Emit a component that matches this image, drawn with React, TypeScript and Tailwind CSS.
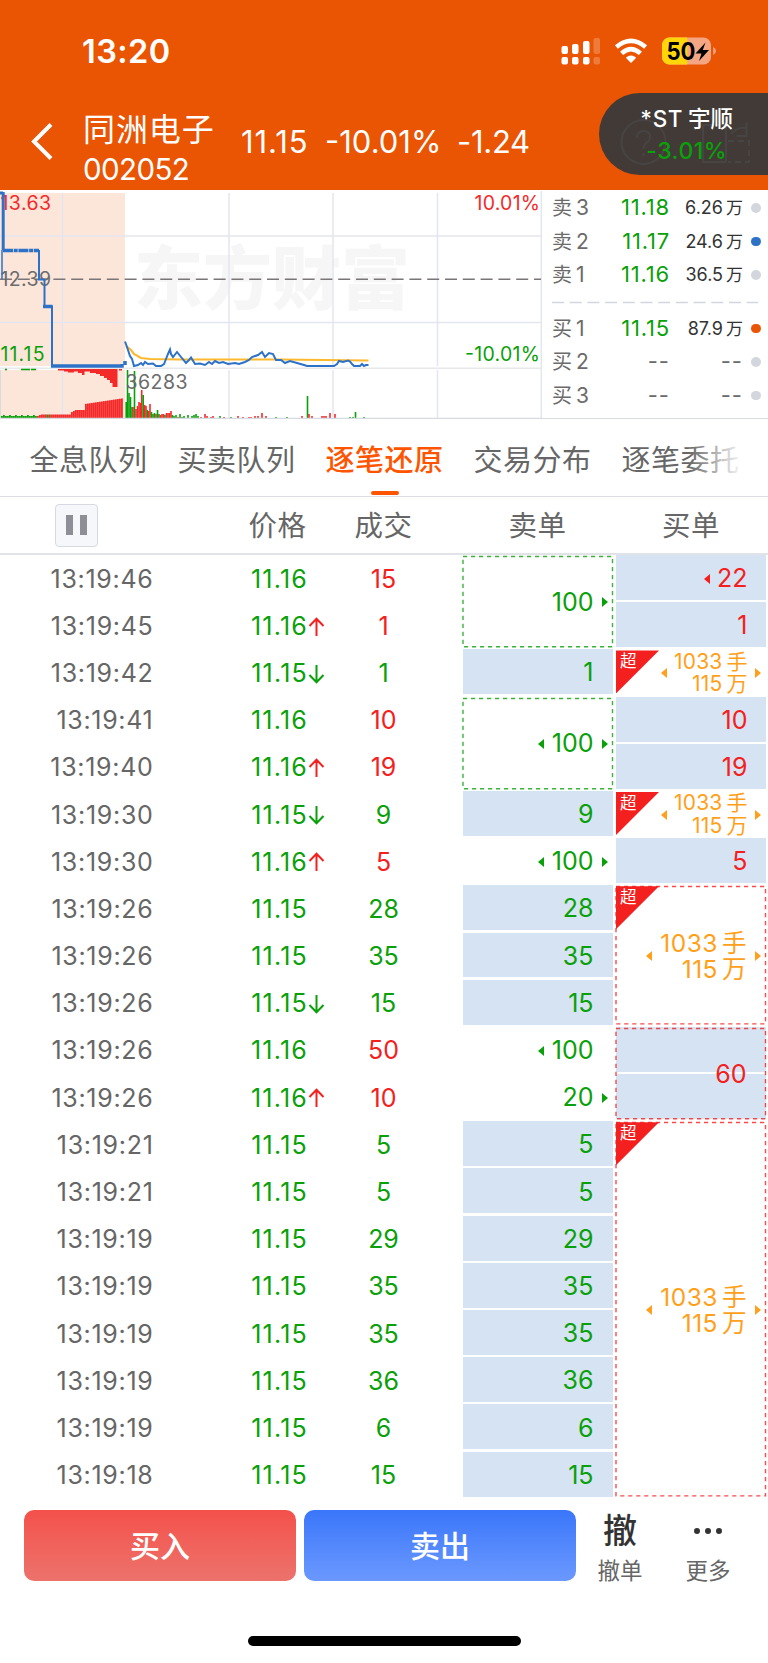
import type { ReactNode } from 'react'

type Tone = 'up' | 'down' | 'big'

type Tick = {
  time: string
  price: string
  dir?: 'up' | 'down'
  vol: string
  side: 'buy' | 'sell'
}

type Block = {
  span: number
  text: string
  filled?: boolean
  outlined?: boolean
  left?: boolean
  right?: boolean
  big?: boolean
}

const ROW_HEIGHT = 47.2

const toneText: Record<Tone, string> = {
  up: 'text-[#f42020]',
  down: 'text-[#0aa00a]',
  big: 'text-[#ff9f1a]',
}

const ticks: Tick[] = [
  { time: '13:19:46', price: '11.16', vol: '15', side: 'buy' },
  { time: '13:19:45', price: '11.16', dir: 'up', vol: '1', side: 'buy' },
  { time: '13:19:42', price: '11.15', dir: 'down', vol: '1', side: 'sell' },
  { time: '13:19:41', price: '11.16', vol: '10', side: 'buy' },
  { time: '13:19:40', price: '11.16', dir: 'up', vol: '19', side: 'buy' },
  { time: '13:19:30', price: '11.15', dir: 'down', vol: '9', side: 'sell' },
  { time: '13:19:30', price: '11.16', dir: 'up', vol: '5', side: 'buy' },
  { time: '13:19:26', price: '11.15', vol: '28', side: 'sell' },
  { time: '13:19:26', price: '11.15', vol: '35', side: 'sell' },
  { time: '13:19:26', price: '11.15', dir: 'down', vol: '15', side: 'sell' },
  { time: '13:19:26', price: '11.16', vol: '50', side: 'buy' },
  { time: '13:19:26', price: '11.16', dir: 'up', vol: '10', side: 'buy' },
  { time: '13:19:21', price: '11.15', vol: '5', side: 'sell' },
  { time: '13:19:21', price: '11.15', vol: '5', side: 'sell' },
  { time: '13:19:19', price: '11.15', vol: '29', side: 'sell' },
  { time: '13:19:19', price: '11.15', vol: '35', side: 'sell' },
  { time: '13:19:19', price: '11.15', vol: '35', side: 'sell' },
  { time: '13:19:19', price: '11.15', vol: '36', side: 'sell' },
  { time: '13:19:19', price: '11.15', vol: '6', side: 'sell' },
  { time: '13:19:18', price: '11.15', vol: '15', side: 'sell' },
]

const sellBlocks: Block[] = [
  { span: 2, text: '100', outlined: true, right: true },
  { span: 1, text: '1', filled: true },
  { span: 2, text: '100', outlined: true, left: true, right: true },
  { span: 1, text: '9', filled: true },
  { span: 1, text: '100', left: true, right: true },
  { span: 1, text: '28', filled: true },
  { span: 1, text: '35', filled: true },
  { span: 1, text: '15', filled: true },
  { span: 1, text: '100', left: true },
  { span: 1, text: '20', right: true },
  { span: 1, text: '5', filled: true },
  { span: 1, text: '5', filled: true },
  { span: 1, text: '29', filled: true },
  { span: 1, text: '35', filled: true },
  { span: 1, text: '35', filled: true },
  { span: 1, text: '36', filled: true },
  { span: 1, text: '6', filled: true },
  { span: 1, text: '15', filled: true },
]

const buyBlocks: Block[] = [
  { span: 1, text: '22', filled: true, left: true },
  { span: 1, text: '1', filled: true },
  { span: 1, text: '1033', big: true, left: true, right: true },
  { span: 1, text: '10', filled: true },
  { span: 1, text: '19', filled: true },
  { span: 1, text: '1033', big: true, left: true, right: true },
  { span: 1, text: '5', filled: true },
  { span: 3, text: '1033', big: true, outlined: true, left: true, right: true },
  { span: 2, text: '60', filled: true, outlined: true },
  { span: 8, text: '1033', big: true, outlined: true, left: true, right: true },
]

const book = [
  { label: '卖', level: '3', price: '11.18', vol: '6.26', dot: 'bg-[#d3d6dd]' },
  { label: '卖', level: '2', price: '11.17', vol: '24.6', dot: 'bg-[#2e72c8]' },
  { label: '卖', level: '1', price: '11.16', vol: '36.5', dot: 'bg-[#d3d6dd]' },
  { label: '买', level: '1', price: '11.15', vol: '87.9', dot: 'bg-[#ea5504]' },
  { label: '买', level: '2', dot: 'bg-[#d3d6dd]' },
  { label: '买', level: '3', dot: 'bg-[#d3d6dd]' },
]

const tabs = ['全息队列', '买卖队列', '逐笔还原', '交易分布', '逐笔委托']

// [x, height, colour] of the bars after the open
const volumeBars: [number, number, 'r' | 'g'][] = [
  [126.2, 16, 'g'], [127.5, 48, 'g'], [129, 25, 'g'], [130.5, 21, 'g'], [132, 11, 'g'],
  [133, 11, 'r'], [134.5, 47, 'g'], [136, 9, 'r'], [137.5, 12, 'r'], [139, 16, 'r'],
  [140.3, 15, 'r'], [141.7, 28, 'r'], [143.2, 23, 'g'], [144.7, 13, 'r'], [146, 12, 'r'],
  [147.3, 8, 'g'], [148.7, 7, 'r'], [150, 14, 'r'], [151.5, 6, 'g'], [153, 4, 'g'],
  [154.5, 5, 'g'], [156, 4, 'r'], [157.5, 8, 'g'], [159, 4, 'g'], [160.5, 3, 'r'],
  [162, 4, 'r'], [163.5, 4, 'r'], [165, 3, 'g'], [166.5, 5, 'r'], [168, 5, 'r'],
  [169.5, 5, 'r'], [171, 7, 'r'], [172.5, 3, 'g'], [174, 2, 'g'], [176, 3, 'g'],
  [178, 1, 'r'], [180, 4, 'g'], [182, 1, 'g'], [184, 2, 'g'], [188, 3, 'g'],
  [192, 2, 'g'], [194, 3, 'g'], [196, 4, 'g'], [198, 2, 'g'], [201, 1, 'r'],
  [205, 4, 'r'], [207, 2, 'r'], [211, 1, 'r'], [213, 2, 'r'], [220, 2, 'g'],
  [224, 1, 'r'], [231, 1, 'g'], [238, 2, 'r'], [243, 1, 'r'], [249, 1, 'r'],
  [251, 1, 'r'], [255, 2, 'r'], [258, 2, 'r'], [262, 5, 'r'], [266, 2, 'r'],
  [276, 1, 'g'], [287, 1, 'g'], [302, 2, 'r'], [307.5, 22, 'g'], [309, 4, 'r'],
  [312, 2, 'r'], [322, 2, 'r'], [324, 2, 'r'], [326, 2, 'r'], [330, 5, 'r'],
  [335, 4, 'r'], [350, 1, 'g'], [353, 1, 'g'], [355.5, 6, 'g'], [364, 1, 'g'],
]

const barColor = { r: '#f42a2a', g: '#0aa00a' }

function StatusBar() {
  return (
    <div className="flex h-[96px] items-start justify-between pt-[36px] pr-[53px] pl-[82px]">
      <span className="text-[32.5px] leading-[32px] font-semibold tracking-[0.4px]">13:20</span>
      <svg width="155" height="30" viewBox="561 36 155 30" className="mr-[-1px]">
        <g fill="#fff">
          <rect x="561.5" y="46" width="6.5" height="8" rx="2" />
          <rect x="572" y="44" width="6.5" height="10" rx="2" />
          <rect x="583" y="41" width="6.5" height="13" rx="2" />
          <rect x="593.5" y="38" width="6.5" height="16" rx="2" opacity=".22" />
          <rect x="561.5" y="57" width="6.5" height="7.5" rx="2" />
          <rect x="572" y="57" width="6.5" height="7.5" rx="2" />
          <rect x="583" y="57" width="6.5" height="7.5" rx="2" />
          <rect x="593.5" y="57" width="6.5" height="7.5" rx="2" opacity=".22" />
          <path d="M631 63 L625.8 57.8 Q631 53.4 636.2 57.8Z" />
        </g>
        <g fill="none" stroke="#fff" strokeWidth="4.6">
          <path d="M616.4 47 Q631 34.8 645.6 47" />
          <path d="M621.6 53.4 Q631 45 640.4 53.4" />
        </g>
        <clipPath id="battery">
          <rect x="662" y="37.5" width="49" height="27" rx="7.5" />
        </clipPath>
        <g clipPath="url(#battery)">
          <rect x="662" y="37" width="50" height="28" fill="#f5a582" />
          <rect x="662" y="37" width="25.3" height="28" fill="#ffd60a" />
        </g>
        <path d="M713.2 47 Q716 48.5 716 51 Q716 53.5 713.2 55Z" fill="#f5a582" />
        <text x="666.5" y="60" fontSize="24.5" fontWeight="700" fill="#000" textLength="29" lengthAdjust="spacingAndGlyphs">
          50
        </text>
        <path d="M705.5 42.5 L695.5 53.5 h6 L699 61 L709 50 h-6.2Z" fill="#000" />
      </svg>
    </div>
  )
}

function FloatingQuote() {
  return (
    <div className="absolute top-[93px] right-0 h-[82px] w-[169.5px] rounded-l-full bg-[#413a36]">
      <svg width="169" height="82" viewBox="599 93 169 82" className="absolute inset-0" fill="none" stroke="#474443" strokeWidth="2">
        <circle cx="643.5" cy="142" r="22" />
        <path d="M637 138 q0-7 6.5-7 t6.5 6 q0 4-4 6 q-2.5 1.5-2.5 6 M643.5 153 v3" />
        <path d="M726 125 h-23 v37 h23 M726 125 v37" />
        <path d="M728 141 h21 v21 h-21" strokeDasharray="6 4" />
        <path d="M731 134 q5-7 15-6 M746.5 122 v14 h-10" />
      </svg>
      <div className="relative flex flex-col items-center pt-[12px] pl-[7px] whitespace-nowrap">
        <span className="text-[22.5px] leading-[27px] font-medium text-white">
          <span className="tracking-[0.6px]">*ST</span>
          <span className="ml-[5px]">宇顺</span>
        </span>
        <span className="mt-[5px] text-[23px] leading-[28px] font-medium tracking-[0.5px] text-[#0aa00a]">-3.01%</span>
      </div>
    </div>
  )
}

function Header() {
  return (
    <header className="relative h-[190px] bg-[#ea5504] text-white">
      <StatusBar />
      <div className="flex h-[94px] items-start">
        <svg width="24" height="42" viewBox="0 0 24 42" className="mt-[24px] ml-[30px]" fill="none" stroke="#fff" strokeWidth="4">
          <path d="M21 4.5 L4 21.5 L21 38.5" />
        </svg>
        <div className="ml-[29px] w-[158px] pt-[17px]">
          <div className="text-[32px] leading-[34px] tracking-[0.9px]">同洲电子</div>
          <div className="mt-[4px] text-[29.5px] leading-[36px] tracking-[-0.6px]">002052</div>
        </div>
        <div className="flex pt-[27px] text-[31px] leading-[38px] whitespace-nowrap">
          <span className="w-[84px] tracking-[0.9px]">11.15</span>
          <span className="w-[132px]">-10.01%</span>
          <span className="tracking-[-0.3px]">-1.24</span>
        </div>
      </div>
      <FloatingQuote />
    </header>
  )
}

function AuctionVolume() {
  const bars: ReactNode[] = []
  for (let x = 1; x < 123; x += 2) {
    let h = 2 + (x % 3 === 0 ? 1 : 0)
    if (x > 40) h = 3.5
    if (x > 69) h = 5 + Math.min(3, (x - 69) / 2)
    if (x > 84) h = 14 + (x - 84) * 0.15
    const color = x < 36 || x === 47 ? barColor.g : barColor.r
    bars.push(<rect key={x} x={x} y={418 - h} width="1.85" height={h} fill={color} />)
  }
  return <>{bars}</>
}

function TrendChart() {
  return (
    <svg width="542" height="229" viewBox="0 190 542 229" className="shrink-0">
      <rect x="0" y="193" width="125" height="173" fill="#fce6da" />
      <rect x="0" y="370" width="125" height="48" fill="#fce6da" />
      <text x="134" y="303.5" textLength="276" fill="#f6f6f6" fontWeight="900" fontSize="69">
        东方财富
      </text>
      <g stroke="#e3e6ee" strokeWidth="1.5">
        <path d="M62.5 193 V366 M229 193 V366 M333 193 V366 M437.5 193 V366" />
        <path d="M62.5 370 V418 M229 370 V418 M333 370 V418 M437.5 370 V418" />
        <path d="M0 236 H541 M0 322.5 H541" />
        <path d="M541.3 191 V418" />
      </g>
      <path d="M0 368.2 H541" stroke="#e6e8ec" strokeWidth="1.5" />
      <path d="M0.5 370 V418" stroke="#d8dae0" />
      <path d="M0 279.2 H541" stroke="#7a7576" strokeWidth="1.5" strokeDasharray="12 5.8" />

      <g fontSize="19.5">
        <text x="0.5" y="210" fill="#f42a2a" textLength="50.5">13.63</text>
        <text x="0.5" y="285.5" fill="#6b6b6b" textLength="50.5">12.39</text>
        <text x="0.5" y="361" fill="#0aa00a" textLength="44">11.15</text>
        <text x="474.5" y="210" fill="#f42a2a" textLength="65.5">10.01%</text>
        <text x="465" y="361" fill="#0aa00a" textLength="75">-10.01%</text>
      </g>

      <AuctionVolume />
      <path
        d="M58 369 H117.5 V387 H112.5 V383 H110 V380 H107 V378 H104 V376 H100 V374 H96 V373 H90 V371.5 H84.5 V375 H82 V373 H78 V371.5 H74 V372.5 H68 V371.5 H64 V370.5 H58Z M119 369 h3 v1.5 h-3Z"
        fill="#f42a2a"
      />
      <path d="M5 369.5 h2 M21 369.5 h9 M31 369.5 h5" stroke="#0aa00a" strokeWidth="1.5" />
      {volumeBars.map(([x, h, c]) => (
        <rect key={x} x={x - 0.8} y={418 - h} width="1.6" height={h} fill={barColor[c]} />
      ))}
      <text x="125.5" y="389" fontSize="19.5" fill="#6b6b6b" textLength="62">36283</text>
      <path d="M0 418.3 H542" stroke="#d8dae2" strokeWidth="1.3" />

      <path
        d="M126 346 L131 350 L134 354 L141 358 L150 359 L180 359.5 H280 L368.5 360.5"
        fill="none"
        stroke="#fdb92e"
        strokeWidth="2.2"
      />
      <g fill="none" stroke="#2e72c8">
        <path d="M0 193 H3" strokeWidth="3" />
        <path d="M3.2 192 V250" strokeWidth="3" />
        <path d="M2 250 V279" strokeWidth="1.5" />
        <path d="M3 250.5 H39" strokeWidth="3.5" strokeDasharray="10 0.7 4 0.7" />
        <path d="M39 250 V279.5 H44.5 V306.5 H52 V366" strokeWidth="2" />
        <path d="M43 306.5 H52.5 M51 366 H122 V364 M125 361 V365" strokeWidth="3.5" />
        <path
          d="M125 341.5 L127 347 L130 356 L132 359 L134 366 L138 365 L141 363 L143 365 L145 362 L148 364 L153 363.5 L156 366 L161 366 L164 364 L166 359 L168 354 L170 349.5 L171 354 L173 357 L177 352 L181 357 L186 363 L189 360 L191 357.5 L195 364 L200 363.5 L205 365 L209 362 L212 364 L215 361 L219 363 L223 362 L228 364 L235 363 L239 364 L245 362 L249 360 L252 357 L258 355 L262 352 L265 357 L269 353 L273 354 L276 360 L281 360 L285 363 L290 361 L297 363 L304 365 L307 366 H334 L337 364 L339 361 L343 362 L348 360.5 L350 361.5 L352 364 L354 366 H360 L362 364 L364 366 L366 365 H368.5"
          strokeWidth="2"
        />
      </g>
    </svg>
  )
}

function OrderBook() {
  return (
    <div className="flex h-[229px] flex-1 flex-col border-b border-[#d8dae2] pt-[1px] pr-[8px] pl-[10px]">
      {book.map(({ label, level, price, vol, dot }, i) => (
        <div key={label + level}>
          {i === 3 && (
            <svg width="206" height="20" className="block" stroke="#d4d6de" strokeWidth="1.7">
              <path d="M0 10.5 H206" strokeDasharray="12 5.7" />
            </svg>
          )}
          <div className="flex h-[33.5px] items-center text-[#6b6b6b]">
            <span className="w-[47px] text-[20px]">
              {label}
              <span className="ml-[4px] text-[21px]">{level}</span>
            </span>
            <span className={`w-[71px] text-right text-[22px] ${price ? 'tracking-[0.8px] text-[#0aa00a]' : 'tracking-[1px]'}`}>
              {price ?? '--'}
            </span>
            <span className={`w-[73px] text-right whitespace-nowrap ${vol ? 'text-[18px] text-[#333]' : 'text-[22px]'}`}>
              {vol ? (
                <>
                  {vol}
                  <span className="ml-[3px] text-[17px]">万</span>
                </>
              ) : (
                <span className="tracking-[1px]">--</span>
              )}
            </span>
            <span className={`ml-[8px] h-[9.5px] w-[9.5px] rounded-full ${dot}`} />
          </div>
        </div>
      ))}
    </div>
  )
}

function Tabs() {
  return (
    <nav className="relative flex h-[78px] gap-[31px] border-b-[1.5px] border-[#dcdde4] pl-[30px] text-[29px] text-[#666]">
      {tabs.map((tab) => {
        const active = tab === '逐笔还原'
        return (
          <div
            key={tab}
            className={`flex w-[117px] flex-col items-center whitespace-nowrap ${active ? 'font-medium text-[#ff5500]' : ''}`}
          >
            <span className="mt-[21px] leading-[42px] tracking-[0.5px]">{tab}</span>
            {active && <span className="mt-[9px] h-[4px] w-[28px] rounded-full bg-[#ff5500]" />}
          </div>
        )
      })}
      <div className="absolute top-0 right-0 h-[76px] w-[80px] bg-linear-to-l from-white from-30% to-transparent" />
    </nav>
  )
}

function TableHead() {
  return (
    <div className="flex h-[58px] items-center border-b-2 border-[#e2e3e9] text-[28.5px] text-[#666]">
      <div className="w-[219px] pl-[55px]">
        <div className="flex h-[43px] w-[43px] items-center justify-center gap-[7.5px] rounded-[4px] border border-[#d6d9e2] bg-[#f6f7fb]">
          <span className="h-[20px] w-[6.5px] bg-[#8e8e96]" />
          <span className="h-[20px] w-[6.5px] bg-[#8e8e96]" />
        </div>
      </div>
      <div className="w-[117px] pt-[3px] text-center tracking-[0.5px]">价格</div>
      <div className="w-[95px] pt-[3px] text-center tracking-[0.5px]">成交</div>
      <div className="w-[213px] pt-[3px] text-center tracking-[0.5px]">卖单</div>
      <div className="w-[94px] pt-[3px] text-center tracking-[0.5px]">买单</div>
    </div>
  )
}

function Arrow({ dir }: { dir: 'up' | 'down' }) {
  return (
    <svg
      width="17"
      height="20"
      viewBox="0 0 17 20"
      fill="none"
      stroke="currentColor"
      strokeWidth="2"
      className={dir === 'up' ? 'text-[#f42020]' : 'text-[#0aa00a]'}
    >
      {dir === 'up' ? (
        <path d="M8.5 19 V1.8 M1.5 9 L8.5 1.8 L15.5 9" />
      ) : (
        <path d="M8.5 1 V18.2 M1.5 11 L8.5 18.2 L15.5 11" />
      )}
    </svg>
  )
}

function TickRow({ tick }: { tick: Tick }) {
  return (
    <div className="flex items-center pt-[1.5px] text-[25px]" style={{ height: ROW_HEIGHT }}>
      <span className="w-[153.5px] text-right tracking-[0.7px] text-[#666]">{tick.time}</span>
      <span className="ml-[92.5px] flex w-[90px] items-center text-[#0aa00a]">
        <span className="w-[62px] text-right tracking-[1.2px]">{tick.price}</span>
        {tick.dir && <Arrow dir={tick.dir} />}
      </span>
      <span className={`w-[95px] text-center ${tick.side === 'buy' ? toneText.up : toneText.down}`}>{tick.vol}</span>
    </div>
  )
}

function Marker({ dir }: { dir: 'left' | 'right' }) {
  return (
    <svg width="6" height="10" viewBox="0 0 6 10" fill="currentColor" className="shrink-0">
      {dir === 'left' ? <path d="M6 0 V10 L0 5Z" /> : <path d="M0 0 V10 L6 5Z" />}
    </svg>
  )
}

function OrderBlock({ block, tone }: { block: Block; tone: 'up' | 'down' }) {
  const { span, text, filled, outlined, left, right, big } = block
  const height = span * ROW_HEIGHT

  return (
    <div className="relative" style={{ height }}>
      {filled && (
        <div className="absolute inset-0 flex flex-col">
          {Array.from({ length: span }, (_, i) => (
            <div key={i} className="mb-[2.25px] flex-1 bg-[#d6e3f3]" />
          ))}
        </div>
      )}
      {outlined && (
        <svg width="152" height={height} className={`absolute top-0 left-[-1px] ${tone === 'up' ? toneText.up : toneText.down}`}>
          <rect
            x="1"
            y="1.5"
            width="149.5"
            height={height - 4.2}
            fill="none"
            stroke="currentColor"
            strokeWidth="1.4"
            strokeDasharray="4.2 3.8"
            opacity=".8"
          />
        </svg>
      )}
      {big && (
        <div className="absolute top-[1px] left-0 h-[43px] w-[43px] bg-[#f42020] text-[16.5px] leading-[22px] text-white [clip-path:polygon(0_0,100%_0,0_100%)]">
          <span className="ml-[4px]">超</span>
        </div>
      )}
      <div
        className={`relative flex h-full items-center justify-end pt-[0.5px] pr-[5px] text-[25px] ${span === 1 && tone === 'up' ? 'gap-[7px]' : 'gap-[8px]'} ${big ? toneText.big : toneText[tone]}`}
      >
        {left && <Marker dir="left" />}
        {big ? (
          <div
            className={
              span === 1
                ? 'text-right text-[21px] leading-[22.5px] tracking-[0.2px]'
                : 'text-right text-[24.5px] leading-[26px] tracking-[0.5px]'
            }
          >
            <div>
              {text}
              <span className="ml-[4px] tracking-normal">手</span>
            </div>
            <div>
              115<span className="ml-[4px] tracking-normal">万</span>
            </div>
          </div>
        ) : (
          <span>{text}</span>
        )}
        {right ? <Marker dir="right" /> : <span className="w-[6px]" />}
      </div>
    </div>
  )
}

function TickTable() {
  return (
    <div className="flex h-[945px]">
      <div className="w-[463px]">
        {ticks.map((tick, i) => (
          <TickRow key={i} tick={tick} />
        ))}
      </div>
      <div className="w-[149.5px]">
        {sellBlocks.map((block, i) => (
          <OrderBlock key={i} block={block} tone="down" />
        ))}
      </div>
      <div className="ml-[3.5px] w-[149.5px]">
        {buyBlocks.map((block, i) => (
          <OrderBlock key={i} block={block} tone="up" />
        ))}
      </div>
    </div>
  )
}

function BottomBar() {
  return (
    <footer className="flex h-[127px] items-start pt-[10px] pl-[24px]">
      <button className="h-[71px] w-[272px] rounded-[10px] bg-linear-to-b from-[#f4504a] to-[#ec726c] pt-[1px] text-[30px] font-medium text-white">
        买入
      </button>
      <button className="ml-[8px] h-[71px] w-[272px] rounded-[10px] bg-linear-to-b from-[#3a76fa] to-[#6b98fe] pt-[1px] text-[30px] font-medium text-white">
        卖出
      </button>
      <div className="ml-[10px] flex w-[68px] flex-col items-center text-[#333]">
        <span className="pt-[1px] text-[34px] leading-[40px] font-medium">撤</span>
        <span className="mt-[5px] text-[22.5px] leading-[30px] text-[#666]">撤单</span>
      </div>
      <div className="ml-[20px] flex w-[68px] flex-col items-center">
        <span className="flex h-[41px] items-center gap-[5px]">
          <i className="h-[6px] w-[6px] rounded-full bg-[#333]" />
          <i className="h-[6px] w-[6px] rounded-full bg-[#333]" />
          <i className="h-[6px] w-[6px] rounded-full bg-[#333]" />
        </span>
        <span className="mt-[5px] text-[22.5px] leading-[30px] text-[#666]">更多</span>
      </div>
    </footer>
  )
}

export default function App() {
  return (
    <div className="h-[1663px] w-[768px] overflow-hidden bg-white font-[Inter,'Noto_Sans_CJK_SC',sans-serif]">
      <Header />
      <div className="flex">
        <TrendChart />
        <OrderBook />
      </div>
      <Tabs />
      <TableHead />
      <TickTable />
      <BottomBar />
      <div className="mx-auto mt-[9px] h-[10px] w-[273px] rounded-full bg-black" />
    </div>
  )
}
